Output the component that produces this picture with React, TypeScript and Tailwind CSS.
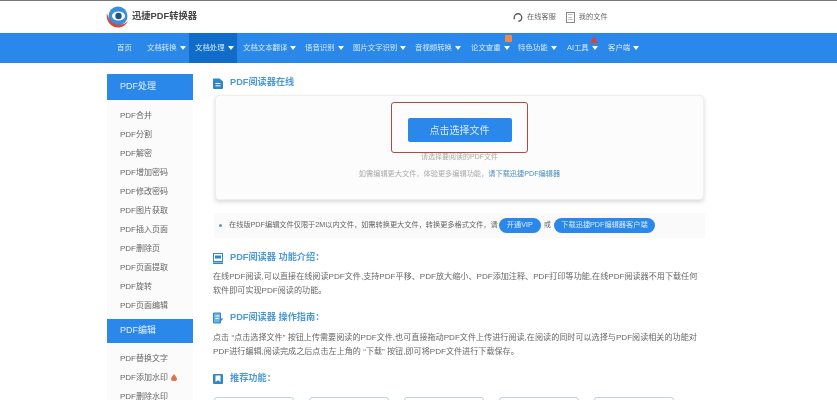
const F = "font-['Liberation_Sans','Noto_Sans_CJK_SC',sans-serif]";

function Caret() {
  return <span className="ml-[3px] inline-block h-0 w-0 border-x-[3.5px] border-t-[4px] border-x-transparent border-t-white" />;
}

const nav: [string, string, boolean, boolean][] = [
  ["首页", "w-[30px]", false, false],
  ["文档转换", "w-[48px]", true, false],
  ["文档处理", "w-[48px]", true, true],
  ["文档文本翻译", "w-[62px]", true, false],
  ["语音识别", "w-[48px]", true, false],
  ["图片文字识别", "w-[62px]", true, false],
  ["音视频转换", "w-[56px]", true, false],
  ["论文查重", "w-[47px]", true, false],
  ["特色功能", "w-[49px]", true, false],
  ["AI工具", "w-[41px]", true, false],
  ["客户端", "w-[48px]", true, false],
];

const list1 = ["PDF合并", "PDF分割", "PDF解密", "PDF增加密码", "PDF修改密码", "PDF图片获取", "PDF插入页面", "PDF删除页", "PDF页面提取", "PDF旋转", "PDF页面编辑"];
const list2 = ["PDF替换文字", "PDF添加水印", "PDF删除水印"];

function SideHead({ children, h }: { children: string; h: string }) {
  return <div className={`${h} flex items-center bg-[#2a88ea] pl-[13px] text-[9px] text-[#e3f0fd]`}>{children}</div>;
}

function Heading({ children, icon, cls }: { children: string; icon: React.ReactNode; cls: string }) {
  return (
    <div className={`flex items-center gap-[7px] text-[9.2px] font-bold text-[#4b9ad8] ${cls}`}>
      {icon}
      <span>{children}</span>
    </div>
  );
}

function DocIcon() {
  return (
    <svg width="10" height="11" viewBox="0 0 10 11" className="shrink-0">
      <path d="M0 1.5A1 1 0 0 1 1 .5h5.5L10 3.5V10a1 1 0 0 1-1 1H1a1 1 0 0 1-1-1z" fill="#2f86c8" />
      <path d="M2.5 5.5h5M2.5 7.8h5" stroke="#fff" strokeWidth="1" />
    </svg>
  );
}
function ScreenIcon() {
  return (
    <svg width="10" height="11" viewBox="0 0 10 11" className="shrink-0">
      <rect x=".5" y=".5" width="9" height="8" fill="none" stroke="#2f86c8" />
      <rect x="2" y="2.5" width="6" height="3" fill="#2f86c8" />
      <path d="M0 10.2h10" stroke="#2f86c8" strokeWidth="1.6" />
    </svg>
  );
}
function GuideIcon() {
  return (
    <svg width="10" height="12" viewBox="0 0 10 12" className="shrink-0">
      <path d="M.5 1h7v10h-7z" fill="#6fb3e6" stroke="#2f86c8" />
      <path d="M2.5 4h4M2.5 6.5h3" stroke="#fff" />
      <path d="M6 9l3-3 1 1-3 3z" fill="#2f86c8" />
    </svg>
  );
}
function StarIcon() {
  return (
    <svg width="10" height="10" viewBox="0 0 10 10" className="shrink-0">
      <rect width="10" height="10" rx="1" fill="#2f86c8" />
      <path d="M2.5 1.5h5V8L5 6.3 2.5 8z" fill="#fff" />
    </svg>
  );
}

export default function App() {
  return (
    <div className={`${F} h-[400px] w-[837px] overflow-hidden bg-white blur-[0.45px]`}>
      <div className="h-px bg-[#777]" />
      <header className="flex h-[32px] items-center bg-white">
        <svg width="23" height="22" viewBox="0 0 23 22" className="ml-[106px] shrink-0">
          <circle cx="12" cy="10" r="9.5" fill="#3a8fd8" />
          <ellipse cx="12.5" cy="10" rx="6.5" ry="4.6" fill="#fff" />
          <circle cx="12.5" cy="10" r="3.2" fill="#24508f" />
          <path d="M1 7C-.5 14 4 21 12 21.5 17 21.5 20 19 22 15 18 19 13 19.5 9 18 5 16.5 2 12 1 7z" fill="#d4483e" />
        </svg>
        <span className="ml-[3px] text-[9.3px] font-bold text-[#444]">迅捷PDF转换器</span>
        <svg width="10" height="11" viewBox="0 0 12 12" className="ml-[316px] shrink-0">
          <path d="M1.5 8V6a4.5 4.5 0 0 1 9 0 4.5 4.5 0 0 1-4 4.5" fill="none" stroke="#555" strokeWidth="1.6" />
        </svg>
        <span className="ml-[4px] text-[7.2px] text-[#666]">在线客服</span>
        <span className="ml-[10px] flex h-[11px] w-[9px] items-center justify-center border border-[#888] text-[6px] text-[#888]">三</span>
        <span className="ml-[4px] text-[7.2px] text-[#666]">我的文件</span>
      </header>
      <nav className="flex h-[30px] items-stretch bg-[#2a88ea] pl-[111px] text-[7.4px] text-[#d7e9fb]">
        {nav.map(([t, w, c, a]) => (
          <div key={t} className={`relative flex items-center pl-[6px] ${w} ${a ? "bg-[#0f6dc9]" : ""}`}>
            {t}
            {c && <Caret />}
            {t === "论文查重" && <span className="absolute left-[40px] top-[2px] h-[7px] w-[7px] rounded-[1px] bg-[#ef8b4a]" />}
            {t === "AI工具" && <span className="absolute left-[29px] top-[3px] h-0 w-0 border-x-[4px] border-b-[7px] border-x-transparent border-b-[#d8443a]" />}
          </div>
        ))}
      </nav>
      <main className="flex pl-[107px] pt-[11px]">
        <aside className="w-[86px] shrink-0 bg-[#fbfbfb]">
          <SideHead h="h-[26px]">PDF处理</SideHead>
          <ul className="pt-[6px] text-[8px] text-[#666]">
            {list1.map((t) => (
              <li key={t} className="flex h-[19px] items-center pl-[13px]">{t}</li>
            ))}
          </ul>
          <div className="mt-[4px]">
            <SideHead h="h-[24px]">PDF编辑</SideHead>
          </div>
          <ul className="pt-[6px] text-[8px] text-[#666]">
            {list2.map((t, i) => (
              <li key={t} className="flex h-[19px] items-center pl-[13px]">
                {t}
                {i === 1 && (
                  <svg width="6" height="7" viewBox="0 0 6 7" className="ml-[3px]">
                    <path d="M3 0C4 2 6 3 6 5a3 2 0 0 1-6 0C0 3 2 2 3 0z" fill="#e0714a" />
                  </svg>
                )}
              </li>
            ))}
          </ul>
        </aside>
        <section className="ml-[20px] w-[492px] shrink-0">
          <Heading cls="h-[14px] mt-[2px]" icon={<DocIcon />}>PDF阅读器在线</Heading>
          <div className="ml-[2px] mt-[5px] flex h-[105px] w-[489px] flex-col items-center rounded-[4px] border border-[#eeeeee] bg-[#fcfcfc] pt-[6px] shadow-[0_2px_4px_rgba(0,0,0,0.15)]">
            <div className="flex h-[51px] w-[137px] justify-center rounded-[3px] border border-[#b8483e] pt-[15px]">
              <div className="flex h-[24px] w-[104px] items-center justify-center rounded-[2px] bg-[#2a88ea] text-[10px] text-[#d7e9fb]">点击选择文件</div>
            </div>
            <div className="text-[7px] leading-[8px] text-[#aaa]">请选择要阅读的PDF文件</div>
            <div className="mt-[8px] text-[7.2px] leading-[10px] text-[#aaa]">
              如需编辑更大文件，体验更多编辑功能，<span className="text-[#4b8fc0]">请下载迅捷PDF编辑器</span>
            </div>
          </div>
          <div className="ml-[1px] mt-[13px] flex h-[25px] w-[491px] items-center bg-[#fafafa] pl-[5px] text-[7.2px] text-[#666]">
            <span className="mr-[7px] h-[3px] w-[3px] rounded-full bg-[#4b9ad8]" />
            在线版PDF编辑文件仅限于2M以内文件，如需转换更大文件，转换更多格式文件，请
            <span className="ml-[1px] flex h-[15px] w-[42px] items-center justify-center rounded-full bg-[#2a88ea] text-[#d7e9fb]">开通VIP</span>
            <span className="mx-[3px]">或</span>
            <span className="flex h-[15px] w-[101px] items-center justify-center rounded-full bg-[#2a88ea] text-[#d7e9fb]">下载迅捷PDF编辑器客户端</span>
          </div>
          <Heading cls="h-[14px] mt-[13px]" icon={<ScreenIcon />}>PDF阅读器 功能介绍：</Heading>
          <p className="mt-[5px] w-[487px] text-[8.1px] leading-[13.5px] text-[#666]">
            在线PDF阅读,可以直接在线阅读PDF文件,支持PDF平移、PDF放大缩小、PDF添加注释、PDF打印等功能,在线PDF阅读器不用下载任何软件即可实现PDF阅读的功能。
          </p>
          <Heading cls="h-[14px] mt-[14px]" icon={<GuideIcon />}>PDF阅读器 操作指南：</Heading>
          <p className="mt-[6px] w-[487px] text-[8.1px] leading-[13.5px] text-[#666]">
            点击 “点击选择文件” 按钮上传需要阅读的PDF文件,也可直接拖动PDF文件上传进行阅读,在阅读的同时可以选择与PDF阅读相关的功能对PDF进行编辑,阅读完成之后点击左上角的 “下载” 按钮,即可将PDF文件进行下载保存。
          </p>
          <Heading cls="h-[14px] mt-[14px]" icon={<StarIcon />}>推荐功能：</Heading>
          <div className="ml-[1px] mt-[11px] flex gap-[15px]">
            {[0, 1, 2, 3, 4].map((i) => (
              <div key={i} className="h-[30px] w-[80px] shrink-0 rounded-[3px] border border-[#b9d3df]" />
            ))}
          </div>
        </section>
      </main>
    </div>
  );
}
